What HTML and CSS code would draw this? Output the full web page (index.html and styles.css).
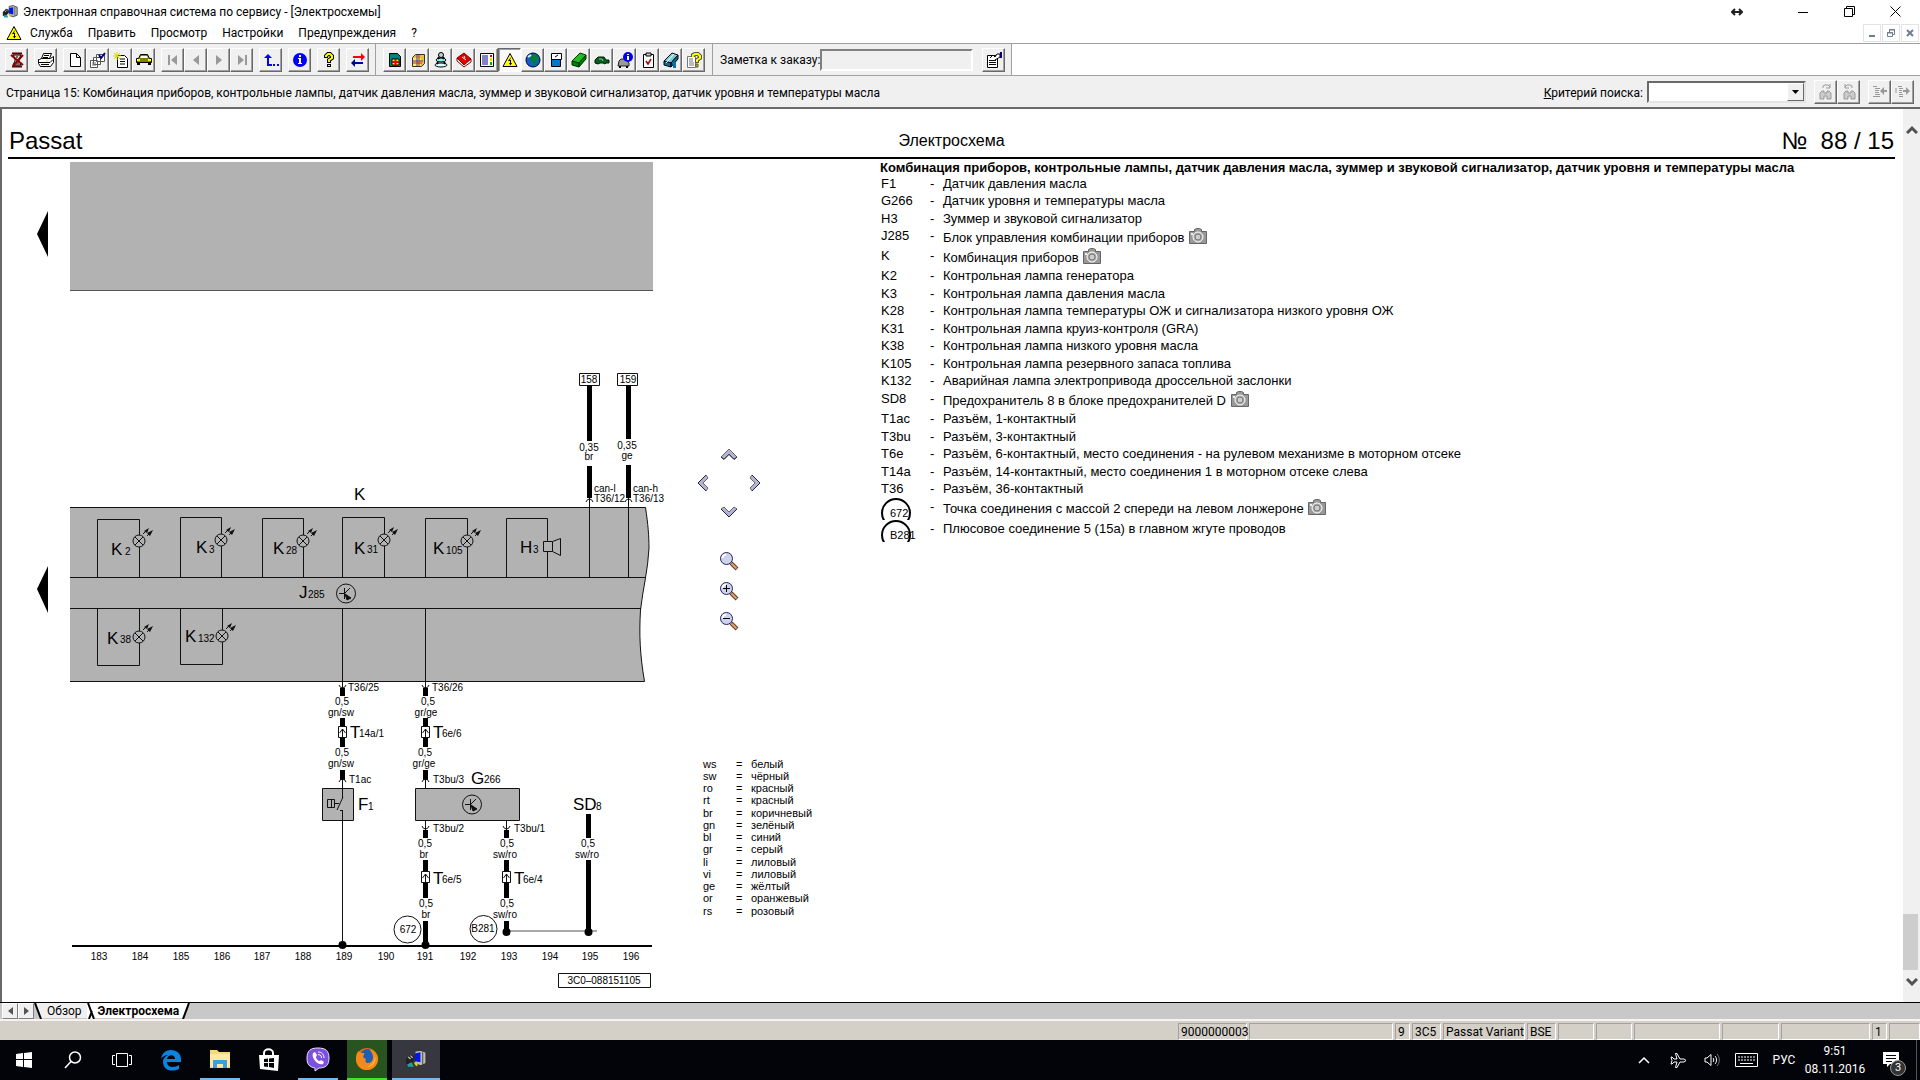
FILE: index.html
```html
<!DOCTYPE html>
<html lang="ru">
<head>
    <meta charset="UTF-8">
    <meta name="viewport" content="width=device-width, initial-scale=1.0">
    <title>Электронная справочная система по сервису</title>
    <link rel="stylesheet" href="styles.css">
</head>
<body>

    <!-- Shared symbols -->
    <svg class="defs" aria-hidden="true">
        <symbol id="lamp" viewBox="-8 -15 24 24" overflow="visible">
            <circle r="6" fill="none" stroke="#111"/>
            <path d="M-4-4L4 4M4-4L-4 4" stroke="#111"/>
            <path d="M4-7L9-12M8-5L13-10" stroke="#111"/>
            <path d="M10-13L5-10L8-8ZM14-11L8-8L11-5Z" fill="#111"/>
        </symbol>
        <symbol id="camera" viewBox="0 0 18 16">
            <path d="M.5 3.500H5.500V1.500L7.500.5H10.500L12.500 1.500V3.500H17.500V15.500H.5Z" fill="#999" stroke="#666"/>
            <circle cx="9" cy="9" r="5" fill="#aaa" stroke="#fff"/>
            <circle cx="9" cy="9" r="3" fill="#ccc" stroke="#777"/>
            <path d="M2 5H4V7H2Z" fill="#eee"/>
        </symbol>
        <symbol id="warn" viewBox="0 0 16 16">
            <path d="M8 1.500L15 14.500H1Z" fill="#ff0" stroke="#000"/>
            <path d="M9 5L6 9H8V11H7L8.500 13.500L10 11H9V8H8Z" fill="#000"/>
        </symbol>
        <symbol id="lens" viewBox="0 0 20 20">
            <path d="M12 12L18 18" stroke="#6b3a1e" stroke-width="4"/>
            <path d="M12.500 12.500L17.500 17.500" stroke="#d9a37c" stroke-width="2"/>
            <circle cx="7.500" cy="7.500" r="6" fill="#cfd2ec" stroke="#22225c" stroke-width="1"/>
            <path d="M3.500 7A4 4 0 0 1 7 3.500" fill="none" stroke="#fff" stroke-width="2"/>
        </symbol>
        <symbol id="app" viewBox="0 0 20 18">
            <path d="M9 2L14 1L19 3V13L14 15L9 13Z" fill="#bbb" stroke="#333"/>
            <path d="M9 4L14 3V12L9 11Z" fill="#0018e0"/>
            <path d="M16 3V14" stroke="#555"/>
            <path d="M1 9L5 5L8 6L9 9L6 13L1 14Z" fill="#222"/>
            <path d="M3 7L5 9M5 6L7 8" stroke="#ccc"/>
            <path d="M2 14L6 12L8 16H3Z" fill="#1aa5a0"/>
            <path d="M9 12L11 15" stroke="#e8d000" stroke-width="2"/>
        </symbol>
    </svg>

    <!-- Title bar -->
    <header class="titlebar">
        <svg class="icon" viewBox="0 0 20 18"><use href="#app"/></svg>
        <h1>Электронная справочная система по сервису - [Электросхемы]</h1>
        <div class="win-buttons">
            <button aria-label="Сдвинуть"><svg width="12" height="8" viewBox="0 0 12 8"><path d="M1 4H11M4 1L1 4L4 7M8 1L11 4L8 7" fill="none" stroke="#222" stroke-width="2"/></svg></button>
            <button aria-label="Свернуть"><svg width="10" height="10" viewBox="0 0 10 10"><path d="M0 5.500H10" stroke="#000"/></svg></button>
            <button aria-label="Окно"><svg width="11" height="11" viewBox="0 0 11 11"><path d="M.5 2.500H8.500V10.500H.5ZM2.500 2.500V.5H10.500V8.500H8.500" fill="none" stroke="#000"/></svg></button>
            <button aria-label="Закрыть"><svg width="11" height="11" viewBox="0 0 11 11"><path d="M.5.5L10.500 10.500M10.500.5L.5 10.500" stroke="#000"/></svg></button>
        </div>
    </header>

    <!-- Menu -->
    <nav class="menubar">
        <svg class="icon" viewBox="0 0 16 16"><use href="#warn"/></svg>
        <button>Служба</button>
        <button>Править</button>
        <button>Просмотр</button>
        <button>Настройки</button>
        <button>Предупреждения</button>
        <button>?</button>
        <div class="mdi-buttons">
            <button aria-label="Свернуть документ"><svg width="10" height="10" viewBox="0 0 10 10"><path d="M2 8H8" stroke="#6d7f92" stroke-width="2"/></svg></button>
            <button aria-label="Восстановить документ"><svg width="10" height="10" viewBox="0 0 10 10"><path d="M1.500 4.500H6.500V8.500H1.500ZM3.500 4V1.500H8.500V6.500H7M3 2H9M1 5H7" fill="none" stroke="#6d7f92"/></svg></button>
            <button aria-label="Закрыть документ"><svg width="10" height="10" viewBox="0 0 10 10"><path d="M2 2L8 8M8 2L2 8" stroke="#6d7f92" stroke-width="2"/></svg></button>
        </div>
    </nav>

    <!-- Toolbar -->
    <div class="toolbar-row">
        <div class="toolbar">
            <div class="group">
                <button aria-label="Завершить"><svg viewBox="0 0 16 16"><path d="M3 1.500H13M3 14.500H13" stroke="#600000" stroke-width="2"/><path d="M4 3H12L10 7V9L12 13H4L6 9V7Z" fill="#ddd" stroke="#000"/><path d="M7 5H9M6 11H10" stroke="#000"/><path d="M2 3L14 13M14 3L4 14" stroke="#900000" stroke-width="2"/></svg></button>
            </div>
            <div class="group">
                <button aria-label="Печать"><svg viewBox="0 0 16 16"><path d="M5.500 1.500H13.500L11.500 6.500H3.500ZM1.500 7.500L3.500 6.500H12.500L15.500 4.500V10.500L12.500 14.500H2.500L.5 11.500V7.500Z" fill="#fff" stroke="#000"/><path d="M6 3.500H11M5 5.500H10M1 10.500H12L15 7.500M3 12.500H11" stroke="#000" fill="none"/><path d="M8 9H10" stroke="#dd0"/></svg></button>
            </div>
            <div class="group">
                <button aria-label="Новый"><svg viewBox="0 0 16 16"><path d="M3.500 1.500H9.500L13.500 5.500V14.500H3.500Z M9.500 1.500V5.500H13.500" fill="#fff" stroke="#000"/></svg></button>
                <button aria-label="Список"><svg viewBox="0 0 16 16"><path d="M6.500 2.500H14.500V9.500H6.500ZM3.500 5.500H10.500V12.500H3.500ZM.5 8.500H7.500V15.500H.5Z" fill="#fff" stroke="#555"/><path d="M2 11H6M2 13H6" stroke="#777"/><path d="M9 3L11 6L15 1" fill="none" stroke="#000080" stroke-width="2"/></svg></button>
                <button aria-label="Создать заказ"><svg viewBox="0 0 16 16"><path d="M4.500 3.500H11.500L14.500 6.500V15.500H4.500Z" fill="#fff" stroke="#000"/><path d="M7 7H12M7 9.500H12M7 12H12" stroke="#000"/><path d="M1 1L7 7M7 1L1 7M4 0V8M0 4H8" stroke="#d8d800"/></svg></button>
                <button aria-label="Автомобиль"><svg viewBox="0 0 16 16"><path d="M4.500 2.500H11.500L13.500 6.500H15.500V10.500H.5V6.500H2.500Z" fill="#808000" stroke="#000"/><path d="M5 4H11L12 6H4Z" fill="#fff"/><path d="M1 8H4M12 8H15" stroke="#ff0" stroke-width="2"/><path d="M1 12H4M12 12H15" stroke="#000" stroke-width="2"/></svg></button>
            </div>
            <div class="group">
                <button disabled aria-label="Первая"><svg viewBox="0 0 16 16"><path d="M3 3H5V13H3ZM12 3V13L6 8Z" fill="#999"/></svg></button>
                <button disabled aria-label="Назад"><svg viewBox="0 0 16 16"><path d="M11 3V13L5 8Z" fill="#999"/></svg></button>
                <button disabled aria-label="Вперёд"><svg viewBox="0 0 16 16"><path d="M5 3V13L11 8Z" fill="#999"/></svg></button>
                <button disabled aria-label="Последняя"><svg viewBox="0 0 16 16"><path d="M11 3H13V13H11ZM4 3V13L10 8Z" fill="#999"/></svg></button>
            </div>
            <div class="group">
                <button aria-label="Вверх"><svg viewBox="0 0 16 16"><path d="M5 2L9 6H6V12H9V14H4V6H1Z" fill="#00f"/><path d="M10 13H12M14 13H16" stroke="#00f" stroke-width="2"/></svg></button>
            </div>
            <div class="group">
                <button aria-label="Информация"><svg viewBox="0 0 16 16"><circle cx="8" cy="8" r="7" fill="#00f"/><path d="M7 3H9V5H7ZM6 6H9V11H10V12H6V11H7V7H6Z" fill="#fff"/></svg></button>
            </div>
            <div class="group">
                <button aria-label="Справка"><svg viewBox="0 0 16 16"><path d="M5 6V4L7 2H9L11 4V6L8 8V11" fill="none" stroke="#000" stroke-width="4"/><path d="M5 5V4L7 2H9L11 4V6L8 8V10" fill="none" stroke="#ff0" stroke-width="2"/><path d="M6 12H10V15H6Z" fill="#000"/><path d="M7 13H9V14H7Z" fill="#ff0"/></svg></button>
            </div>
            <div class="group">
                <button aria-label="Обмен"><svg viewBox="0 0 16 16"><path d="M3 5H12" stroke="#f00" stroke-width="2"/><path d="M11 1L15 5L11 9Z" fill="#f00"/><path d="M4 11H13" stroke="#0000a0" stroke-width="2"/><path d="M5 7L1 11L5 15Z" fill="#0000a0"/></svg></button>
            </div>
        </div>
        <div class="toolbar">
            <div class="group">
                <button aria-label="Каталог"><svg viewBox="0 0 16 16"><path d="M2.500 1.500H10.500L13.500 4.500V14.500H2.500Z" fill="#008080" stroke="#000"/><path d="M5 7H12V13H5Z" fill="#ff0" stroke="#000"/><path d="M8.500 7V13M5 10H12" stroke="#e00000" stroke-width="2"/></svg></button>
                <button aria-label="Детали"><svg viewBox="0 0 16 16"><path d="M2.500 5.500L5.500 2.500H14.500V11.500L11.500 14.500H2.500Z" fill="#e8c040" stroke="#333"/><path d="M3 6H11V14H3Z" fill="#ffe860"/><path d="M7 3V14M3 9H13" stroke="#3040c0"/><path d="M9 3V14M3 11H12" stroke="#d02020"/></svg></button>
                <button aria-label="Техобслуживание"><svg viewBox="0 0 16 16"><circle cx="8" cy="3" r="2.500" fill="#ccc" stroke="#000"/><ellipse cx="8" cy="8" rx="5" ry="2" fill="#8ee" stroke="#000"/><ellipse cx="8" cy="13" rx="6" ry="2" fill="#dff" stroke="#000"/><path d="M6 5L5 7M10 5L11 7M5 10L4 12M11 10L12 12" stroke="#000" stroke-width="2"/></svg></button>
                <button aria-label="Руководство"><svg viewBox="0 0 16 16"><path d="M1 6L8 1L15 7L8 14Z" fill="#e00000" stroke="#800000"/><path d="M1 6V9L8 15L15 10V7L8 13Z" fill="#fff" stroke="#800000"/><path d="M6 5L10 8M8 4L9 6" stroke="#fff"/></svg></button>
                <button aria-label="Таблица"><svg viewBox="0 0 16 16"><path d="M1.500 1.500H14.500V14.500H1.500Z" fill="#fff" stroke="#000"/><path d="M3 4H9M3 6H9M3 8H9M3 10H9M3 12H9" stroke="#0000a0"/><path d="M11 3H13V5H11Z" fill="#e00"/><path d="M11 6H13V9H11Z" fill="#dd0"/><path d="M11 10H13V13H11Z" fill="#0a0"/></svg></button>
                <button class="pressed" aria-label="Электросхемы"><svg viewBox="0 0 16 16"><use href="#warn"/></svg></button>
                <button aria-label="Сеть"><svg viewBox="0 0 16 16"><circle cx="8" cy="8" r="7" fill="#1060c8" stroke="#003"/><path d="M7 2L12 3L14 7L11 8L12 12L9 14L8 10L5 8Z" fill="#008030"/><path d="M3 5L6 3" stroke="#dff" stroke-width="2"/></svg></button>
                <button aria-label="Кузов"><svg viewBox="0 0 16 16"><path d="M3.500 1.500H13.500V7.500H3.500Z" fill="#fff" stroke="#000"/><path d="M3.500 7.500H12.500V14.500H3.500Z" fill="#0078c8" stroke="#000"/><path d="M7 5L10 3" stroke="#000"/></svg></button>
                <button aria-label="Книга"><svg viewBox="0 0 16 16"><path d="M1 9L9 1L15 3L8 11Z" fill="#20c020" stroke="#003000"/><path d="M1 9L8 11V15L1 13ZM8 11L15 3V7L8 15Z" fill="#008000" stroke="#003000"/></svg></button>
                <button aria-label="Кабриолет"><svg viewBox="0 0 16 16"><path d="M1 8L4 5H10L12 8H15V11H12L11 12L9 11H6L4 12L1 11Z" fill="#006020" stroke="#002000"/><path d="M5 7H8L9 9" stroke="#9c9" fill="none"/></svg></button>
                <button aria-label="Данные автомобиля"><svg viewBox="0 0 16 16"><path d="M2 9L4 7H9L12 11V14H1Z" fill="#999" stroke="#222"/><path d="M2 15H4M9 15H11" stroke="#000" stroke-width="2"/><circle cx="11" cy="5" r="5" fill="#00f"/><path d="M10 2H12V3H10ZM10 4H12V8H10Z" fill="#fff"/></svg></button>
                <button aria-label="Проверка"><svg viewBox="0 0 16 16"><path d="M3.500 2.500H13.500V15.500H3.500Z" fill="#fff" stroke="#000"/><path d="M6 1H11V4H6Z" fill="#ccc" stroke="#000"/><path d="M6 9L8 12L11 7" fill="none" stroke="#a00000" stroke-width="1.500"/></svg></button>
                <button aria-label="Справочник"><svg viewBox="0 0 16 16"><path d="M1 9L9 1L15 3L8 11Z" fill="#7cc" stroke="#002"/><path d="M1 9L8 11V15L1 13ZM8 11L15 3V7L8 15Z" fill="#107080" stroke="#002"/><path d="M3 11L11 2" stroke="#fff"/><path d="M10 10H13V16H10Z" fill="#07a"/></svg></button>
                <button aria-label="Помощь"><svg viewBox="0 0 16 16"><path d="M1.500 4.500H9.500V15.500H1.500Z" fill="#fff" stroke="#777"/><path d="M3 7H7M3 9H7M3 11H8M3 13H8" stroke="#777"/><path d="M7 5V3L9 2H12L14 4V6L11 8V11" fill="none" stroke="#554" stroke-width="4"/><path d="M7 5V3L9 2H12L14 4V6L11 8V10" fill="none" stroke="#ff0" stroke-width="2"/><path d="M10 12H12V15H10Z" fill="#dd0" stroke="#554"/></svg></button>
            </div>
        </div>
        <div class="toolbar note">
            <label for="note">Заметка к заказу:</label>
            <input id="note" type="text" disabled>
            <button aria-label="Свойства"><svg viewBox="0 0 16 16"><path d="M1.500 3.500H11.500V15.500H1.500Z" fill="#fff" stroke="#000"/><path d="M3 8.500H10M3 10.500H10M3 12.500H10" stroke="#000"/><path d="M4 6L7 3L9 5L11 2H14V5L9 8" fill="#fff" stroke="#000"/><path d="M14 0H16V6H14Z" fill="#000080"/></svg></button>
        </div>
    </div>

    <!-- Page info and search -->
    <div class="infobar">
        <p>Страница 15: Комбинация приборов, контрольные лампы, датчик давления масла, зуммер и звуковой сигнализатор, датчик уровня и температуры масла</p>
        <div class="search">
            <label for="search"><u>К</u>ритерий поиска:</label>
            <div class="combo">
                <select id="search"><option></option></select>
                <span class="combo-arrow"><svg width="7" height="4" viewBox="0 0 7 4"><path d="M0 0H7L3.500 4Z"/></svg></span>
            </div>
            <div class="group">
                <button disabled aria-label="Найти далее"><svg viewBox="0 0 16 16"><path d="M2 15V9L4 7H6V9H9V7H11L13 9V15H9V12H6V15Z" fill="#ccc" stroke="#999"/><path d="M5 4V2L7 1H10L12 3M12 0V4H8" fill="none" stroke="#999"/></svg></button>
                <button disabled aria-label="Найти назад"><svg viewBox="0 0 16 16"><path d="M3 15V9L5 7H7V9H10V7H12L14 9V15H10V12H7V15Z" fill="#ccc" stroke="#999"/><path d="M11 4V2L9 1H6L4 3M4 0V4H8" fill="none" stroke="#999"/></svg></button>
            </div>
            <div class="group">
                <button disabled aria-label="Предыдущее"><svg viewBox="0 0 16 16"><path d="M1 2.500H5M3 4.500H8M3 6.500H7M3 8.500H7M3 10.500H8M1 12.500H8" stroke="#999"/><path d="M8 7L12 3V6H15V8H12V11Z" fill="#999"/></svg></button>
                <button disabled aria-label="Следующее"><svg viewBox="0 0 16 16"><path d="M3 2.500H7M1 4V9M4 4.500H8M4 6.500H7M4 8.500H7M4 10.500H8M4 12.500H8" stroke="#999"/><path d="M15 7L11 3V6H8V8H11V11Z" fill="#999"/></svg></button>
            </div>
        </div>
    </div>

    <!-- Document -->
    <main class="document">
        <article class="sheet">
            <header class="sheet-head">
                <h2>Passat</h2>
                <p class="subject">Электросхема</p>
                <p class="number">№&nbsp; 88 / 15</p>
            </header>

            <div class="sheet-body">
                <!-- Wiring diagram -->
                <svg class="diagram" width="660" height="830" viewBox="8 160 660 830" role="img" aria-label="Электросхема 88/15">
                    <path d="M37 234L48 211V257ZM37 589L48 566V613Z"/>
                    <path class="fill" d="M70 162H653V291H70Z"/>
                    <path class="edge" d="M70 290.500H653"/>

                    <!-- K: instrument cluster -->
                    <path class="fill" d="M70 507H645.500C648 524 649 536 649 548C648 570 643 588 640.500 610C639 635 640 655 644.500 681H70Z"/>
                    <path class="thin" d="M70 507.500H645.500C648 524 649 536 649 548C648 570 643 588 640.500 610C639 635 640 655 644.500 681.500H70M70 577.500H645M70 608.500H641"/>
                    <path class="thin" d="M97.500 578V519.500H139.500V535M139.500 547V578M180.500 578V517.500H221.500V534M221.500 546V578M262.500 578V518.500H303.500V535M303.500 547V578M342.500 578V517.500H384.500V534M384.500 546V578M425.500 578V518.500H467.500V535M467.500 547V578M506.500 578V518.500H547.500V541M547.500 551V578"/>
                    <path class="thin" d="M97.500 608V665.500H139.500V643M139.500 631V608M180.500 608V664.500H222.500V642M222.500 630V608"/>
                    <path class="thin" d="M543.500 541.500H552.500V551.500H543.500ZM552.500 541.500L560.500 538.500V555.500L552.500 551.500"/>
                    <use href="#lamp" x="131" y="526" width="24" height="24"/>
                    <use href="#lamp" x="213" y="525" width="24" height="24"/>
                    <use href="#lamp" x="295" y="526" width="24" height="24"/>
                    <use href="#lamp" x="376" y="525" width="24" height="24"/>
                    <use href="#lamp" x="459" y="526" width="24" height="24"/>
                    <use href="#lamp" x="131" y="622" width="24" height="24"/>
                    <use href="#lamp" x="214" y="621" width="24" height="24"/>

                    <g class="big">
                        <text x="354" y="500">K</text>
                        <text x="111" y="555">K</text><text x="196" y="553">K</text>
                        <text x="273" y="554">K</text><text x="354" y="554">K</text>
                        <text x="433" y="554">K</text><text x="520" y="553">H</text>
                        <text x="107" y="644">K</text><text x="185" y="642">K</text>
                        <text x="299" y="598">J</text>
                    </g>
                    <g class="sub">
                        <text x="125" y="555">2</text><text x="209" y="553">3</text>
                        <text x="286" y="554">28</text><text x="367" y="553">31</text>
                        <text x="446" y="554">105</text><text x="533" y="553">3</text>
                        <text x="120" y="643">38</text><text x="198" y="642">132</text>
                        <text x="308" y="598">285</text>
                    </g>
                    <g class="thin">
                        <circle cx="346" cy="593.500" r="9.500"/><path d="M339 593.500H344M344.500 588V599M350 588L344 594L348 598"/>
                        <path d="M345 594L351 598L347 600Z" fill="#111"/>
                    </g>

                    <!-- CAN wires -->
                    <path class="thin" d="M579.500 373.500H599.500V385.500H579.500ZM617.500 373.500H637.500V385.500H617.500Z"/>
                    <path class="wire" d="M589.500 385V441M589.500 466V498M628.500 385V439M628.500 465V498"/>
                    <path class="thin" d="M589.500 498V578M628.500 498V578M586 502Q587 499 589.500 499Q592 499 593 502M625 502Q626 499 628.500 499Q631 499 632 502"/>
                    <g class="note-text">
                        <text class="mid" x="589" y="383">158</text><text class="mid" x="628" y="383">159</text>
                        <text class="mid" x="589" y="451">0,35</text><text class="mid" x="589" y="460">br</text>
                        <text class="mid" x="627" y="449">0,35</text><text class="mid" x="627" y="459">ge</text>
                        <text x="594" y="492">can-l</text><text x="594" y="502">T36/12</text>
                        <text x="633" y="492">can-h</text><text x="633" y="502">T36/13</text>
                    </g>

                    <!-- Wires to F1 and G266 -->
                    <path class="wire" d="M342.500 688V696M342.500 718V727M342.500 737V747M342.500 770V780M425.500 688V696M425.500 718V727M425.500 737V747M425.500 770V780M425.500 830V838M425.500 860V871M425.500 882V898M425.500 921V945M506.500 830V838M506.500 860V871M506.500 882V898M506.500 921V931M588.500 814V838M588.500 860V931"/>
                    <path class="thin" d="M342.500 608V688M425.500 608V688M342.500 780V797M425.500 780V788M425.500 820V830M506.500 820V830"/>
                    <path class="thin" d="M339 685Q340 688 342.500 688Q345 688 346 685M422 685Q423 688 425.500 688Q428 688 429 685M422 826Q423 829 425.500 829Q428 829 429 826M503 826Q504 829 506.500 829Q509 829 510 826"/>
                    <path class="thin" d="M339 782Q340 779 342.500 779Q345 779 346 782M422 782Q423 779 425.500 779Q428 779 429 782"/>
                    <path class="thin white" d="M338.500 726.500H346.500V737.500H338.500ZM421.500 726.500H429.500V737.500H421.500ZM421.500 871.500H429.500V882.500H421.500ZM502.500 871.500H510.500V882.500H502.500Z"/>
                    <path class="thin" d="M342.500 729V737M339.500 733L342.500 729L345.500 733M425.500 729V737M422.500 733L425.500 729L428.500 733M425.500 874V882M422.500 878L425.500 874L428.500 878M506.500 874V882M503.500 878L506.500 874L509.500 878"/>

                    <path class="fill" d="M322 788H353V820H322ZM416 788H519V820H416Z"/>
                    <path class="thin" d="M322.500 788.500H353.500V820.500H322.500ZM415.500 788.500H519.500V820.500H415.500ZM327.500 799.500H334.500V807.500H327.500ZM331.500 799V808M335 803.500H339M342.500 788V798M343 797L337 810M340 810.500H343M342.500 810V945"/>
                    <g class="thin">
                        <circle cx="472" cy="804.500" r="9.500"/><path d="M465 804.500H470M470.500 799V810M476 799L470 805L474 809"/>
                        <path d="M471 805L477 809L473 811Z" fill="#111"/>
                    </g>
                    <path class="edge" d="M507 931H597"/>
                    <path d="M72 945H652V947H72Z"/>
                    <circle cx="342.500" cy="945" r="4"/><circle cx="425.500" cy="945" r="4"/>
                    <circle cx="506.500" cy="932" r="4"/><circle cx="588.500" cy="932" r="4"/>
                    <g class="thin"><circle cx="407.500" cy="929.500" r="13.500"/><circle cx="483.500" cy="929" r="13.500"/></g>

                    <g class="big">
                        <text x="350" y="738">T</text><text x="433" y="738">T</text>
                        <text x="433" y="884">T</text><text x="514" y="884">T</text>
                        <text x="358" y="810">F</text><text x="471" y="784">G</text>
                        <text x="573" y="810">SD</text>
                    </g>
                    <g class="sub">
                        <text x="359" y="737">14a/1</text><text x="442" y="737">6e/6</text>
                        <text x="442" y="883">6e/5</text><text x="523" y="883">6e/4</text>
                        <text x="368" y="810">1</text><text x="484" y="783">266</text>
                        <text x="596" y="810">8</text>
                    </g>
                    <g class="note-text">
                        <text x="348" y="691">T36/25</text><text x="432" y="691">T36/26</text>
                        <text x="349" y="783">T1ac</text><text x="433" y="783">T3bu/3</text>
                        <text x="433" y="832">T3bu/2</text><text x="514" y="832">T3bu/1</text>
                        <text class="mid" x="342" y="705">0,5</text><text class="mid" x="341" y="716">gn/sw</text>
                        <text class="mid" x="342" y="756">0,5</text><text class="mid" x="341" y="767">gn/sw</text>
                        <text class="mid" x="428" y="705">0,5</text><text class="mid" x="426" y="716">gr/ge</text>
                        <text class="mid" x="425" y="756">0,5</text><text class="mid" x="424" y="767">gr/ge</text>
                        <text class="mid" x="425" y="847">0,5</text><text class="mid" x="424" y="858">br</text>
                        <text class="mid" x="426" y="907">0,5</text><text class="mid" x="426" y="918">br</text>
                        <text class="mid" x="507" y="847">0,5</text><text class="mid" x="505" y="858">sw/ro</text>
                        <text class="mid" x="507" y="907">0,5</text><text class="mid" x="505" y="918">sw/ro</text>
                        <text class="mid" x="588" y="847">0,5</text><text class="mid" x="587" y="858">sw/ro</text>
                        <text class="mid" x="408" y="933">672</text><text class="mid" x="483" y="932">B281</text>
                    </g>
                    <g class="note-text">
                        <text class="mid" x="99" y="960">183</text><text class="mid" x="140" y="960">184</text>
                        <text class="mid" x="181" y="960">185</text><text class="mid" x="222" y="960">186</text>
                        <text class="mid" x="262" y="960">187</text><text class="mid" x="303" y="960">188</text>
                        <text class="mid" x="344" y="960">189</text><text class="mid" x="386" y="960">190</text>
                        <text class="mid" x="425" y="960">191</text><text class="mid" x="468" y="960">192</text>
                        <text class="mid" x="509" y="960">193</text><text class="mid" x="550" y="960">194</text>
                        <text class="mid" x="590" y="960">195</text><text class="mid" x="631" y="960">196</text>
                        <text class="mid" x="604" y="984">3C0–088151105</text>
                    </g>
                    <path class="thin" d="M558.500 973.500H650.500V987.500H558.500Z"/>
                </svg>

                <div class="side">
                    <!-- Scroll and zoom of the diagram -->
                    <div class="pan">
                        <button class="up" aria-label="Вверх"><svg width="18" height="12" viewBox="0 0 18 12"><path d="M9 1L17 9L14 11L9 6L4 11L1 9Z" fill="#b4b4d0" stroke="#667"/><path d="M1 9L4 11.500L9 6.500L14 11.500L17 9" fill="none" stroke="#224"/></svg></button>
                        <button class="left" aria-label="Влево"><svg width="12" height="18" viewBox="0 0 12 18"><path d="M1 9L9 1L11 4L6 9L11 14L9 17Z" fill="#b4b4d0" stroke="#667"/><path d="M9 1L1 9L9 17" fill="none" stroke="#224"/></svg></button>
                        <button class="right" aria-label="Вправо"><svg width="12" height="18" viewBox="0 0 12 18"><path d="M11 9L3 1L1 4L6 9L1 14L3 17Z" fill="#b4b4d0" stroke="#667"/><path d="M3 1L11 9L3 17" fill="none" stroke="#224"/></svg></button>
                        <button class="down" aria-label="Вниз"><svg width="18" height="12" viewBox="0 0 18 12"><path d="M9 11L17 3L14 1L9 6L4 1L1 3Z" fill="#b4b4d0" stroke="#667"/><path d="M1 3L9 11L17 3" fill="none" stroke="#224"/></svg></button>
                    </div>
                    <div class="zoom">
                        <button aria-label="Исходный размер"><svg width="20" height="20"><use href="#lens"/></svg></button>
                        <button aria-label="Увеличить"><svg width="20" height="20"><use href="#lens"/><path d="M4 7.500H11M7.500 4V11" stroke="#000"/></svg></button>
                        <button aria-label="Уменьшить"><svg width="20" height="20"><use href="#lens"/><path d="M4 7.500H11" stroke="#000"/></svg></button>
                    </div>
                    <table class="colors">
                        <tr><th>ws</th><td>=</td><td>белый</td></tr>
                        <tr><th>sw</th><td>=</td><td>чёрный</td></tr>
                        <tr><th>ro</th><td>=</td><td>красный</td></tr>
                        <tr><th>rt</th><td>=</td><td>красный</td></tr>
                        <tr><th>br</th><td>=</td><td>коричневый</td></tr>
                        <tr><th>gn</th><td>=</td><td>зелёный</td></tr>
                        <tr><th>bl</th><td>=</td><td>синий</td></tr>
                        <tr><th>gr</th><td>=</td><td>серый</td></tr>
                        <tr><th>li</th><td>=</td><td>лиловый</td></tr>
                        <tr><th>vi</th><td>=</td><td>лиловый</td></tr>
                        <tr><th>ge</th><td>=</td><td>жёлтый</td></tr>
                        <tr><th>or</th><td>=</td><td>оранжевый</td></tr>
                        <tr><th>rs</th><td>=</td><td>розовый</td></tr>
                    </table>
                </div>

                <!-- Component list -->
                <section class="legend">
                    <h3>Комбинация приборов, контрольные лампы, датчик давления масла, зуммер и звуковой сигнализатор, датчик уровня и температуры масла</h3>
                    <table class="parts">
                        <tr><th>F1</th><td>-</td><td>Датчик давления масла</td></tr>
                        <tr><th>G266</th><td>-</td><td>Датчик уровня и температуры масла</td></tr>
                        <tr><th>H3</th><td>-</td><td>Зуммер и звуковой сигнализатор</td></tr>
                        <tr class="photo"><th>J285</th><td>-</td><td>Блок управления комбинации приборов <svg class="camera"><use href="#camera"/></svg></td></tr>
                        <tr class="photo"><th>K</th><td>-</td><td>Комбинация приборов <svg class="camera"><use href="#camera"/></svg></td></tr>
                        <tr><th>K2</th><td>-</td><td>Контрольная лампа генератора</td></tr>
                        <tr><th>K3</th><td>-</td><td>Контрольная лампа давления масла</td></tr>
                        <tr><th>K28</th><td>-</td><td>Контрольная лампа температуры ОЖ и сигнализатора низкого уровня ОЖ</td></tr>
                        <tr><th>K31</th><td>-</td><td>Контрольная лампа круиз-контроля (GRA)</td></tr>
                        <tr><th>K38</th><td>-</td><td>Контрольная лампа низкого уровня масла</td></tr>
                        <tr><th>K105</th><td>-</td><td>Контрольная лампа резервного запаса топлива</td></tr>
                        <tr><th>K132</th><td>-</td><td>Аварийная лампа электропривода дроссельной заслонки</td></tr>
                        <tr class="photo"><th>SD8</th><td>-</td><td>Предохранитель 8 в блоке предохранителей D <svg class="camera"><use href="#camera"/></svg></td></tr>
                        <tr><th>T1ac</th><td>-</td><td>Разъём, 1-контактный</td></tr>
                        <tr><th>T3bu</th><td>-</td><td>Разъём, 3-контактный</td></tr>
                        <tr><th>T6e</th><td>-</td><td>Разъём, 6-контактный, место соединения - на рулевом механизме в моторном отсеке</td></tr>
                        <tr><th>T14a</th><td>-</td><td>Разъём, 14-контактный, место соединения 1 в моторном отсеке слева</td></tr>
                        <tr><th>T36</th><td>-</td><td>Разъём, 36-контактный</td></tr>
                        <tr class="photo"><th><svg class="point" width="40" height="22" viewBox="0 0 40 22"><circle cx="15" cy="15" r="14" fill="none" stroke="#000" stroke-width="2"/><text x="9" y="19">672</text></svg></th><td>-</td><td>Точка соединения с массой 2 спереди на левом лонжероне <svg class="camera"><use href="#camera"/></svg></td></tr>
                        <tr><th><svg class="point" width="40" height="22" viewBox="0 0 40 22"><circle cx="15" cy="15" r="14" fill="none" stroke="#000" stroke-width="2"/><text x="9" y="19">B281</text></svg></th><td>-</td><td>Плюсовое соединение 5 (15a) в главном жгуте проводов</td></tr>
                    </table>
                </section>
            </div>
        </article>

        <div class="scrollbar">
            <button aria-label="Прокрутить вверх"><svg width="12" height="9" viewBox="0 0 12 9"><path d="M1 8L6 3L11 8" fill="none" stroke="#505050" stroke-width="3"/></svg></button>
            <div class="track"><div class="thumb"></div></div>
            <button aria-label="Прокрутить вниз"><svg width="12" height="9" viewBox="0 0 12 9"><path d="M1 1L6 6L11 1" fill="none" stroke="#505050" stroke-width="3"/></svg></button>
        </div>
    </main>

    <!-- Sheet tabs -->
    <nav class="tabs">
        <button class="step" aria-label="Вкладки влево"><svg width="5" height="8" viewBox="0 0 5 8"><path d="M5 0V8L0 4Z" fill="#555"/></svg></button>
        <button class="step" aria-label="Вкладки вправо"><svg width="5" height="8" viewBox="0 0 5 8"><path d="M0 0V8L5 4Z" fill="#555"/></svg></button>
        <svg class="slant" width="8" height="16" viewBox="0 0 8 16"><path d="M0 0H8V16H6Z" fill="#f0f0f0"/><path d="M1 0L7 16" stroke="#000" stroke-width="2"/></svg>
        <button class="tab">Обзор</button>
        <svg class="slant" width="8" height="16" viewBox="0 0 8 16"><path d="M0 0H8V16H0Z" fill="#fff"/><path d="M1 0L7 16M5 8L2 16" stroke="#000" stroke-width="2"/></svg>
        <button class="tab active">Электросхема</button>
        <svg class="slant" width="8" height="16" viewBox="0 0 8 16"><path d="M0 0H7L1 16H0Z" fill="#fff"/><path d="M7 0L1 16" stroke="#000" stroke-width="2"/></svg>
    </nav>

    <!-- Status bar -->
    <footer class="status">
        <span class="w68">9000000003</span><span class="w144"></span><span class="w15">9</span><span class="w28">3C5</span>
        <span class="w82">Passat Variant</span><span class="w28">BSE</span><span class="w36"></span><span class="w36"></span>
        <span class="w86"></span><span class="w57"></span><span class="w89"></span><span class="w15">1</span><span class="w31"></span>
    </footer>

    <!-- Taskbar -->
    <div class="taskbar">
        <div class="apps">
            <button aria-label="Пуск"><svg width="16" height="16" viewBox="0 0 16 16"><path d="M0 2L7 1V7H0ZM8 1L16 0V7H8ZM0 8H7V15L0 14ZM8 8H16V16L8 15Z" fill="#fff"/></svg></button>
            <button aria-label="Поиск"><svg width="18" height="18" viewBox="0 0 18 18"><circle cx="11" cy="6.500" r="5.500" fill="none" stroke="#fff" stroke-width="1.500"/><path d="M7 10.500L1 17" stroke="#fff" stroke-width="1.500"/></svg></button>
            <button aria-label="Представление задач"><svg width="20" height="16" viewBox="0 0 20 16"><path d="M4.500 1.500H15.500V14.500H4.500ZM3 3.500H.5V12.500H3M17 3.500H19.500V12.500H17" fill="none" stroke="#fff"/></svg></button>
            <button aria-label="Edge"><svg width="22" height="22" viewBox="0 0 22 22"><path d="M1 10C2 4 6 1 11 1C17 1 21 5 21 10V13H7C7 19 15 19 19 16V20C10 24 3 20 3 13C3 9 6 7 8 6C5 6 2 8 1 10ZM7 10H15C15 5 8 5 7 10Z" fill="#0c83dc"/></svg></button>
            <button class="open" aria-label="Проводник"><svg width="22" height="20" viewBox="0 0 22 20"><path d="M1 1H8L10 3H21V19H1Z" fill="#f8d775"/><path d="M1 5H21V18H1Z" fill="#ffe9a2"/><path d="M4 11H18V19H14V15H8V19H4Z" fill="#3aa0dc"/></svg></button>
            <button aria-label="Магазин"><svg width="22" height="24" viewBox="0 0 22 24"><path d="M1 7H21L20 23L2 21Z" fill="#fff"/><path d="M6 9V5C6 0 15 0 15 5V8" fill="none" stroke="#fff" stroke-width="2"/><path d="M6 11L10 10.500V14H6ZM11 10.500L16 10V14H11ZM6 15H10V19L6 18.500ZM11 15H16V20L11 19Z" fill="#02040a"/></svg></button>
            <button class="open" aria-label="Viber"><svg width="24" height="25" viewBox="0 0 24 25"><path d="M12 1C20 1 23 4 23 11C23 18 20 21 13 21L9 24V21C3 20 1 17 1 11C1 4 4 1 12 1Z" fill="#7d51e0" stroke="#e8e0ff"/><path d="M7 6L9 5L11 8L10 10C10 12 12 14 14 14L15 13L18 15L17 17C12 19 5 11 7 6Z" fill="#fff"/><path d="M12 5C16 5 18 8 18 11M12 7.500C15 8 15.500 9 15.500 11" fill="none" stroke="#fff"/></svg></button>
            <button class="firefox" aria-label="Firefox"><svg width="24" height="24" viewBox="0 0 24 24"><circle cx="12" cy="12" r="11" fill="#e66a10"/><circle cx="13" cy="10" r="8" fill="#1d5fb4"/><path d="M14 2C19 3 23 7 23 12C23 18 18 23 12 23C5 23 1 18 1 12C1 8 2 5 4 4C5 6 6 6 9 6C10 8 7 9 9 11L11 12C9 16 13 17 16 15C19 13 19 7 14 2Z" fill="#f58a1c"/><path d="M20 9C22 15 17 20 12 20C17 18 20 15 20 9Z" fill="#fcd030"/></svg></button>
            <button class="current" aria-label="Справочная система"><svg width="24" height="20" viewBox="0 0 20 18"><use href="#app"/></svg></button>
        </div>
        <div class="tray">
            <button aria-label="Скрытые значки"><svg width="12" height="8" viewBox="0 0 12 8"><path d="M1 7L6 2L11 7" fill="none" stroke="#fff" stroke-width="1.500"/></svg></button>
            <button aria-label="Режим полёта"><svg width="17" height="17" viewBox="0 0 17 17"><path d="M16 8.500L14 7H10L7 1.500H5.500L7 7H4L2 5H1L2 8.500L1 12H2L4 10H7L5.500 15.500H7L10 10H14Z" fill="none" stroke="#fff"/></svg></button>
            <button aria-label="Громкость"><svg width="16" height="16" viewBox="0 0 16 16"><path d="M1 6H3L7 2.500V13.500L3 10H1Z" fill="none" stroke="#fff"/><path d="M9 6C10 7 10 9 9 10M11 4C13 6 13 10 11 12" fill="none" stroke="#fff"/><path d="M13 2C16 5 16 11 13 14" fill="none" stroke="#777"/></svg></button>
            <button aria-label="Клавиатура"><svg width="23" height="14" viewBox="0 0 23 14"><path d="M.5.5H22.500V13.500H.5Z" fill="none" stroke="#fff"/><path d="M3 4H20M3 7H20" stroke="#fff" stroke-dasharray="2 1"/><path d="M5 10.500H18" stroke="#fff"/></svg></button>
            <button class="lang">РУС</button>
            <button class="clock"><span>9:51</span><span>08.11.2016</span></button>
            <button class="messages" aria-label="Уведомления"><svg width="18" height="18" viewBox="0 0 18 18"><path d="M1 1H17V13H8L5 16V13H1Z" fill="#fff"/><path d="M4 4.500H14M4 7.500H14M4 10.500H10" stroke="#02040a"/></svg><span class="badge">3</span></button>
        </div>
    </div>

</body>
</html>
```
FILE: styles.css
```css
* {
    box-sizing: border-box;
}
body {
    margin: 0;
    min-height: 100vh;
    display: flex;
    flex-direction: column;
    font-family: Roboto, "Noto Sans", sans-serif;
    font-size: 12px;
    color: #000;
    background: #fff;
}
h1, h2, h3, p {
    margin: 0;
    font-weight: normal;
}
button {
    display: flex;
    align-items: center;
    justify-content: center;
    padding: 0;
    border: 0;
    background: none;
    font: inherit;
    color: inherit;
}
.defs {
    position: absolute;
    width: 0;
    height: 0;
}

/* title and menu */
.titlebar {
    display: flex;
    align-items: center;
    height: 22px;
    padding: 1px 2px 0;
}
.titlebar h1 {
    flex: 1;
    padding-left: 5px;
    font-size: 12px;
}
.icon {
    width: 16px;
    height: 16px;
}
.win-buttons {
    display: flex;
}
.win-buttons button {
    width: 46px;
    height: 20px;
}
.win-buttons button:first-child {
    margin-right: 20px;
}
.menubar {
    display: flex;
    align-items: center;
    gap: 15px;
    height: 22px;
    padding-left: 6px;
    border-bottom: 1px solid #a0a0a0;
}
.menubar .icon {
    margin-right: -7px;
}
.mdi-buttons {
    display: flex;
    gap: 1px;
    margin-left: auto;
    padding-right: 1px;
}
.mdi-buttons button {
    width: 18px;
    height: 18px;
    border: 1px solid #e3e3e3;
}

/* toolbar */
.toolbar-row {
    display: flex;
    height: 32px;
    border-bottom: 1px solid #a0a0a0;
}
.toolbar {
    display: flex;
    align-items: center;
    gap: 6px;
    padding: 0 6px 0 5px;
    background: #f0f0f0;
    border-right: 1px solid #a0a0a0;
}
.toolbar + .toolbar {
    padding: 0 7px;
}
.group {
    display: flex;
}
.toolbar button, .search button {
    width: 23px;
    height: 24px;
    border: 1px solid;
    border-color: #fff #696969 #696969 #fff;
    box-shadow: inset -1px -1px #a0a0a0;
    background: #f0f0f0;
}
.toolbar button svg, .search button svg {
    width: 16px;
    height: 16px;
}
.toolbar button.pressed {
    border-color: #696969 #fff #fff #696969;
    box-shadow: inset 1px 1px #a0a0a0;
    background: #fafafa;
}
.toolbar.note {
    gap: 0;
    padding-right: 6px;
}
.note input {
    width: 153px;
    height: 22px;
    margin-right: 9px;
    border: 2px solid;
    border-color: #808080 #fff #fff #808080;
    background: #f0f0f0;
}

/* info bar */
.infobar {
    display: flex;
    align-items: center;
    justify-content: space-between;
    height: 33px;
    padding: 0 6px;
    background: #f0f0f0;
    border-bottom: 2px solid #696969;
}
.infobar p, .search label {
    padding-top: 2px;
}
.search {
    display: flex;
    align-items: center;
    gap: 8px;
}
.search label {
    margin-right: -4px;
}
.combo {
    display: flex;
    width: 159px;
    height: 22px;
    border: 2px solid;
    border-color: #696969 #e3e3e3 #e3e3e3 #696969;
    background: #fff;
}
.combo select {
    flex: 1;
    border: 0;
    appearance: none;
    background: #fff;
}
.combo-arrow {
    display: flex;
    align-items: center;
    justify-content: center;
    width: 17px;
    background: #f0f0f0;
    border: 1px solid;
    border-color: #fff #696969 #696969 #fff;
}

/* document */
.document {
    flex: 1;
    display: flex;
    border-left: 2px solid #696969;
    font-family: "Liberation Sans", Arial, sans-serif;
}
.sheet {
    flex: 1;
    padding: 14px 8px 0 6px;
}
.sheet-head {
    display: grid;
    grid-template-columns: 1fr auto 1fr;
    align-items: center;
    height: 36px;
    padding-top: 2px;
    border-bottom: 2px solid #000;
}
.sheet-head h2, .number {
    padding: 0 1px;
    font-size: 24px;
}
.subject {
    font-size: 16px;
}
.number {
    text-align: right;
}
.sheet-body {
    display: grid;
    grid-template-columns: auto 212px 1fr;
    align-items: start;
    padding-top: 1px;
}
.diagram {
    display: block;
}
.diagram .fill {
    fill: #b2b2b2;
}
.diagram .thin {
    fill: none;
    stroke: #111;
}
.diagram .white {
    fill: #fff;
}
.diagram .edge {
    fill: none;
    stroke: #555;
}
.diagram .wire {
    stroke: #000;
    stroke-width: 5px;
}
.big {
    font-size: 17px;
}
.sub, .note-text {
    font-size: 10px;
}
.mid {
    text-anchor: middle;
}

/* pan and zoom */
.side {
    padding: 284px 0 0 29px;
}
.pan {
    display: grid;
    grid-template-columns: 20px 18px 20px;
    grid-template-rows: 20px 38px 20px;
    grid-template-areas: ". up ." "left . right" ". down .";
    gap: 0 3px;
}
.up {
    grid-area: up;
}
.left {
    grid-area: left;
    justify-content: start;
}
.right {
    grid-area: right;
    justify-content: end;
}
.down {
    grid-area: down;
}
.zoom {
    display: flex;
    flex-direction: column;
    gap: 10px;
    width: 64px;
    padding-top: 29px;
    align-items: center;
}
.colors {
    margin-top: 127px;
    margin-left: 6px;
    border-collapse: collapse;
    font-size: 11px;
    line-height: 12px;
}
.colors tr:nth-child(4n) {
    line-height: 13px;
}
.colors th {
    width: 33px;
}
.colors td:nth-child(2) {
    width: 15px;
}
th, td {
    padding: 0;
    font-weight: normal;
    text-align: left;
}

/* component list */
.legend h3 {
    font-size: 13px;
    line-height: 15px;
    font-weight: bold;
}
.parts {
    border-collapse: collapse;
    font-size: 13px;
    line-height: 17px;
}
.parts tr:nth-child(even) {
    line-height: 18px;
}
.parts th, .parts td {
    vertical-align: top;
}
.parts th {
    width: 50px;
    padding-left: 1px;
}
.parts td:nth-child(2) {
    width: 13px;
}
.parts .photo {
    height: 20px;
    line-height: 17px;
}
.parts .photo td:last-child {
    line-height: 19px;
    padding-top: 1px;
}
.camera {
    width: 18px;
    height: 16px;
    margin-left: 1px;
    vertical-align: -2px;
}
.point {
    display: block;
    font-size: 11px;
}

/* scrollbar */
.scrollbar {
    display: flex;
    flex-direction: column;
    width: 17px;
    padding: 14px 0;
    background: #f0f0f0;
}
.scrollbar button {
    height: 12px;
}
.track {
    flex: 1;
    display: flex;
    flex-direction: column;
    justify-content: flex-end;
    padding-bottom: 6px;
}
.thumb {
    height: 56px;
    margin-right: 2px;
    background: #cdcdcd;
}

/* tabs and status */
.tabs {
    display: flex;
    height: 17px;
    padding-left: 2px;
    background: #c8c8c8;
    border-top: 1px solid #000;
}
.step {
    width: 16px;
    background: #f0f0f0;
    border: 1px solid;
    border-color: #fff #808080 #808080 #fff;
}
.tab {
    height: 15px;
    padding: 0 5px;
    background: #f0f0f0;
}
.tab.active {
    padding: 0 3px;
    background: #fff;
    font-weight: bold;
}
.slant {
    height: 16px;
}
.status {
    display: flex;
    justify-content: flex-end;
    align-items: center;
    gap: 2px;
    height: 21px;
    padding-top: 2px;
    background: #d4d0c8;
    border-top: 2px solid #f4f4f4;
}
.status span {
    height: 17px;
    padding-left: 2px;
    line-height: 16px;
    white-space: nowrap;
    border: 1px solid;
    border-color: #a0a0a0 #fff #fff #a0a0a0;
}
.w15 { width: 15px; }
.w28 { width: 29px; }
.w31 { width: 31px; }
.w36 { width: 36px; }
.w57 { width: 57px; }
.w68 { width: 69px; }
.w82 { width: 82px; }
.w86 { width: 86px; }
.w89 { width: 89px; }
.w144 { width: 144px; }

/* taskbar */
.taskbar {
    display: flex;
    justify-content: space-between;
    height: 40px;
    background: #02040a;
    color: #fff;
}
.apps {
    display: flex;
    gap: 1px;
}
.apps button {
    width: 48px;
}
.apps .open {
    border: solid #76b9ed;
    border-width: 0 0 2px;
    margin: 0 4px;
    width: 40px;
}
.apps .firefox {
    width: 40px;
    margin: 0 4px;
    background: #27541f;
    border-bottom: 2px solid #45e02c;
}
.apps .current {
    background: #37383f;
    border-bottom: 2px solid #76b9ed;
}
.tray {
    display: flex;
    padding-right: 3px;
}
.tray button {
    width: 34px;
}
.tray .lang {
    width: 42px;
}
.tray .clock {
    flex-direction: column;
    width: 60px;
    line-height: 18px;
}
.tray .messages {
    position: relative;
    width: 52px;
    border-right: 1px solid #555;
}
.badge {
    position: absolute;
    right: 10px;
    bottom: 4px;
    width: 16px;
    height: 16px;
    border: 1px solid #999;
    border-radius: 50%;
    background: #333;
    font-size: 11px;
    line-height: 14px;
}
```
